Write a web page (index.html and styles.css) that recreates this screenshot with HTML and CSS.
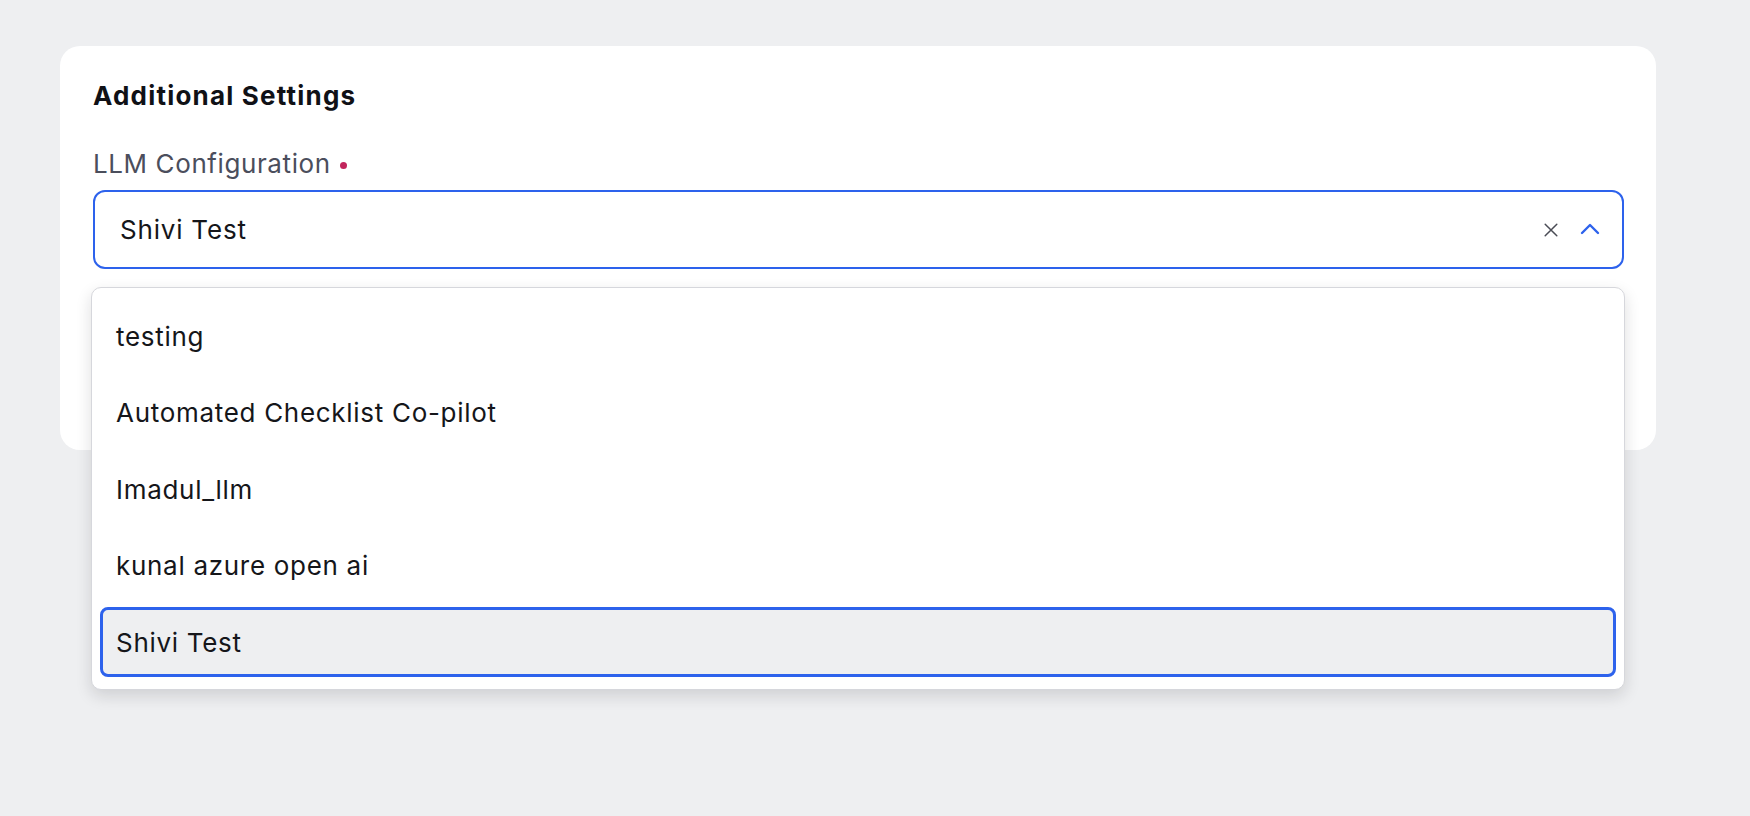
FILE: index.html
```html
<!DOCTYPE html>
<html lang="en">
<head>
<meta charset="utf-8">
<title>Additional Settings</title>
<link rel="stylesheet" href="styles.css">
</head>
<body>
<div class="page">
  <section class="card">
    <h2 class="card-title">Additional Settings</h2>
    <div class="field">
      <label class="field-label">LLM Configuration <span class="required"></span></label>
      <div class="select-wrap">
        <div class="select">
          <span class="select-value">Shivi Test</span>
          <span class="select-icons">
            <svg class="icon-clear" width="16" height="16" viewBox="0 0 16 16"><path d="M2.2 2.2 L13.8 13.8 M13.8 2.2 L2.2 13.8" stroke="#4a4c55" stroke-width="1.5" stroke-linecap="round" fill="none"/></svg>
            <svg class="icon-chevron" width="20" height="12" viewBox="0 0 20 12"><path d="M2 10 L10 2 L18 10" stroke="#2d62ec" stroke-width="2.4" stroke-linecap="round" stroke-linejoin="round" fill="none"/></svg>
          </span>
        </div>
        <ul class="menu">
          <li class="menu-item">testing</li>
          <li class="menu-item">Automated Checklist Co-pilot</li>
          <li class="menu-item">Imadul_llm</li>
          <li class="menu-item">kunal azure open ai</li>
          <li class="menu-item is-selected">Shivi Test</li>
        </ul>
      </div>
    </div>
  </section>
</div>
</body>
</html>
```

FILE: styles.css
```css
* { box-sizing: border-box; }
html, body { margin: 0; padding: 0; }
body {
  background: #eeeff1;
  font-family: Inter, "Noto Sans", "Liberation Sans", sans-serif;
  color: #15161a;
  width: 1750px;
  height: 816px;
  overflow: hidden;
}
.page {
  padding: 46px 0 0 60px;
}
.card {
  width: 1596px;
  height: 404px;
  background: #ffffff;
  border-radius: 20px;
  padding: 33px 32px 0 33px;
}
.card-title {
  margin: 0;
  font-size: 26px;
  font-weight: 700;
  line-height: 34px;
  letter-spacing: 1.2px;
  color: #101116;
}
.field { margin-top: 36px; }
.field-label {
  display: flex;
  align-items: center;
  font-size: 26px;
  line-height: 30px;
  color: #4b4e5c;
  letter-spacing: 0.6px;
}
.required {
  display: inline-block;
  width: 7px;
  height: 7px;
  border-radius: 50%;
  background: #c2255c;
  margin-left: 9px;
  margin-top: 2px;
}
.select-wrap {
  position: relative;
  margin-top: 11px;
  width: 1531px;
}
.select {
  height: 79px;
  border: 2px solid #2d62ec;
  border-radius: 12px;
  display: flex;
  align-items: center;
  padding: 0 22px 0 25px;
  background: #fff;
}
.select-value {
  flex: 1;
  font-size: 26px;
  letter-spacing: 0.8px;
  color: #15161a;
}
.select-icons {
  display: flex;
  align-items: center;
  gap: 21px;
}
.icon-chevron { margin-top: -2px; }
.menu {
  position: absolute;
  left: -2px;
  top: 97px;
  width: 1534px;
  margin: 0;
  padding: 13px 8px 12px;
  list-style: none;
  background: #fff;
  border: 1.5px solid #d6d7dc;
  border-radius: 10px;
  box-shadow: 0 6px 16px rgba(20, 22, 30, 0.14);
  display: flex;
  flex-direction: column;
  gap: 6.5px;
}
.menu-item {
  height: 70px;
  display: flex;
  align-items: center;
  padding: 0 13px;
  font-size: 26px;
  letter-spacing: 0.7px;
  color: #15161a;
  border: 3px solid transparent;
  border-radius: 8px;
}
.menu-item.is-selected {
  background: #eeeff1;
  border-color: #2d62ec;
}
```
